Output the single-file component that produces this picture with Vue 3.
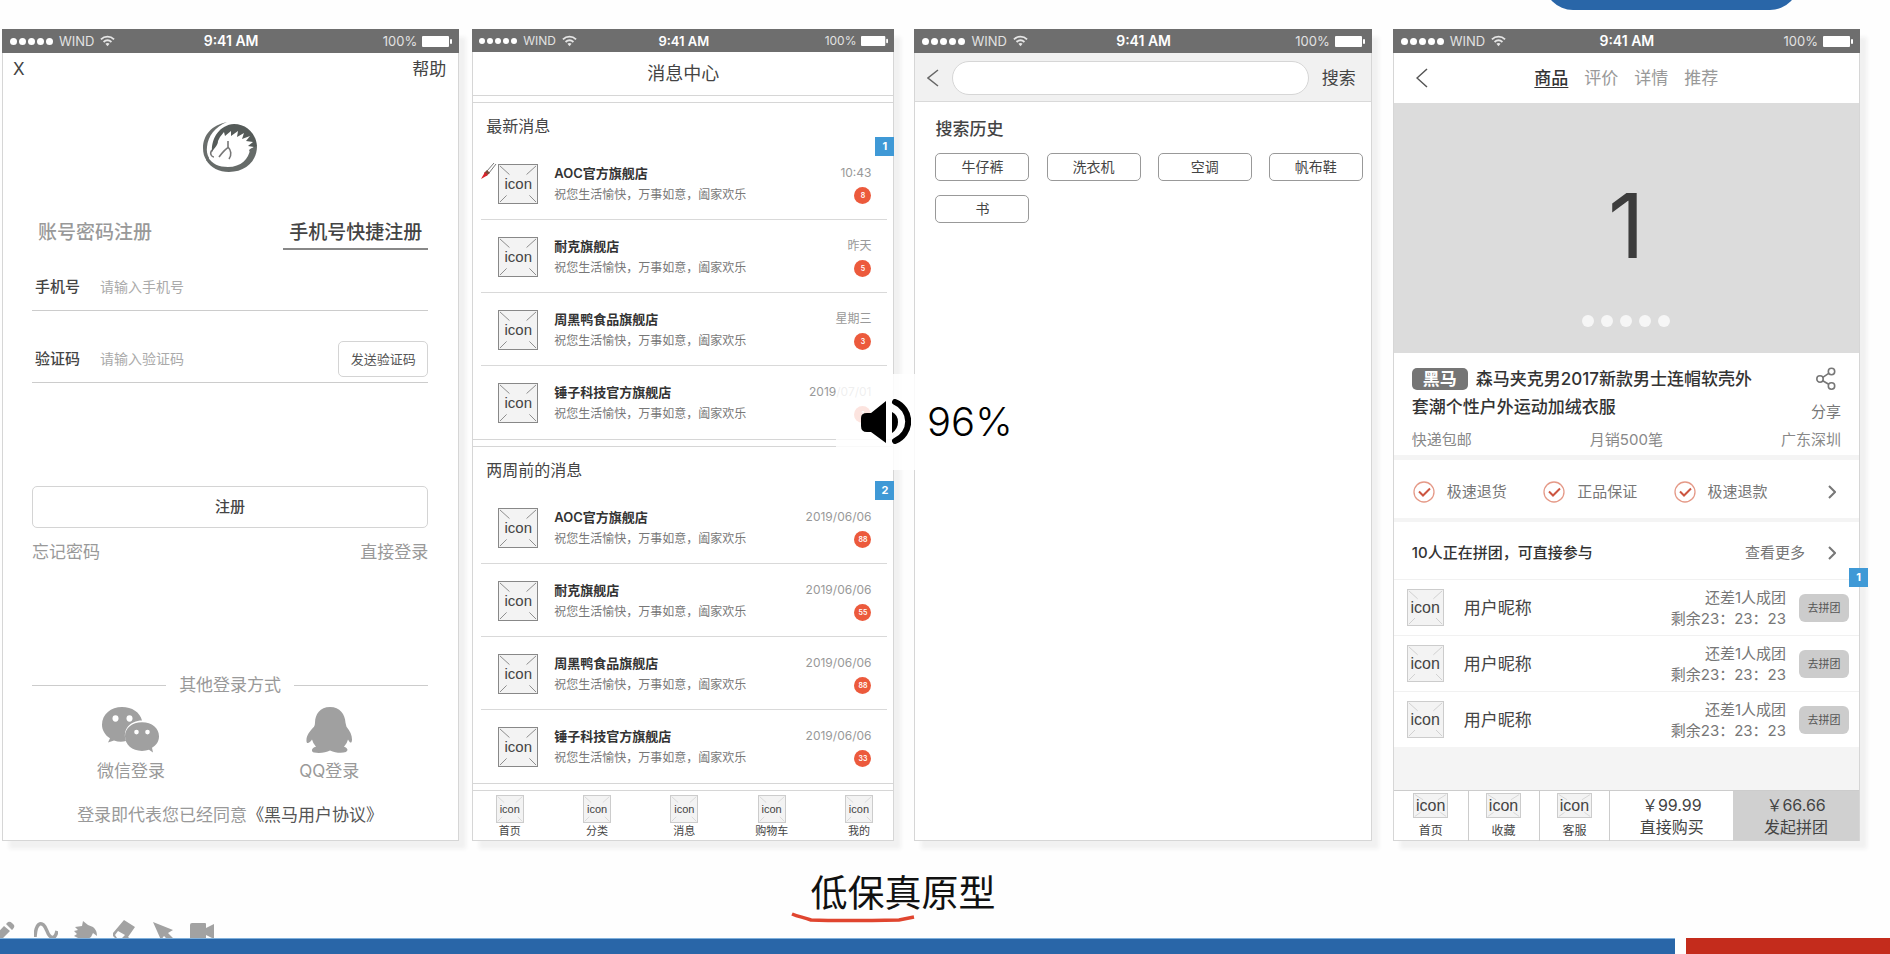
<script setup>
const phones = ['register', 'messages', 'search', 'product']

const greeting = '祝您生活愉快，万事如意，阖家欢乐'
const sections = [
  {
    title: '最新消息',
    note: '1',
    pen: true,
    items: [
      { shop: 'AOC官方旗舰店', date: '10:43', count: 8 },
      { shop: '耐克旗舰店', date: '昨天', count: 5 },
      { shop: '周黑鸭食品旗舰店', date: '星期三', count: 3 },
      { shop: '锤子科技官方旗舰店', date: '2019/07/01', count: 1 },
    ],
  },
  {
    title: '两周前的消息',
    note: '2',
    pen: false,
    items: [
      { shop: 'AOC官方旗舰店', date: '2019/06/06', count: 88 },
      { shop: '耐克旗舰店', date: '2019/06/06', count: 55 },
      { shop: '周黑鸭食品旗舰店', date: '2019/06/06', count: 88 },
      { shop: '锤子科技官方旗舰店', date: '2019/06/06', count: 33 },
    ],
  },
]
const tabs = ['首页', '分类', '消息', '购物车', '我的']
const history = ['牛仔裤', '洗衣机', '空调', '帆布鞋', '书']
const productTabs = ['商品', '评价', '详情', '推荐']
const promises = ['极速退货', '正品保证', '极速退款']
const shortcuts = ['首页', '收藏', '客服']
</script>

<template>
  <div class="page">
    <div class="pill"></div>

    <main class="phones">
      <section v-for="phone in phones" :key="phone" class="phone" :class="phone">
        <div class="status">
          <div class="carrier">
            <span class="signal"><i v-for="n in 5" :key="n"></i></span>
            <span>WIND</span>
            <svg class="wifi" viewBox="0 0 16 12" fill="none" stroke="#e6e6e6" stroke-width="2">
              <path d="M1 4.2C5 .4 11 .4 15 4.2" />
              <path d="M3.8 7C6.3 4.8 9.7 4.8 12.2 7" />
              <path d="M8 11.5L5.8 9C7 8 9 8 10.2 9Z" fill="#e6e6e6" stroke="none" />
            </svg>
          </div>
          <b>9:41 AM</b>
          <div class="power">
            <span>100%</span>
            <svg class="battery" viewBox="0 0 30 11" fill="#fff">
              <rect width="27" height="11" rx="1" />
              <rect x="28" y="3" width="2" height="5" rx="1" />
            </svg>
          </div>
        </div>

        <div v-if="phone === 'register'" class="screen">
          <header class="reg-top">
            <button class="plain">X</button>
            <a href="#" class="dark">帮助</a>
          </header>
          <form class="reg" @submit.prevent>
            <svg class="logo" viewBox="0 0 55 51" aria-label="黑马">
              <path fill="#6a6e6c" d="M24 0C9 3 0 13 0 26C0 31 1 35 4 39L6 36C4 32 3.500 29 4 25C5 14 12 5 24 0Z" />
              <path fill="#555b59" d="M9 30C8 17 16 3 31 2C43 2 53 11 54 24L50 34L46 28L51 25L45 24L50 20L43 19L47 14L39 17L41 11L34 15L35 9L28 14L28 9L22 14L21 10L17 15L15 19C15 23 12 25 9 30Z" />
              <path fill="#666b69" d="M54 24C54 40 42 50 26 50C16 50 8 46 3 38L5 35C9 42 16 45 25 45C38 45 46 37 47 27Z" />
              <path fill="none" stroke="#777" stroke-width="1.600" d="M16 35C19 31 22 27 26 25M25 19L25 25C28 28 29 33 26 37M9 28C6 32 9 35 11 35" />
            </svg>
            <nav class="reg-tabs">
              <a href="#">账号密码注册</a>
              <a href="#" class="on">手机号快捷注册</a>
            </nav>
            <div class="field">
              <label for="mobile">手机号</label>
              <input id="mobile" type="tel" placeholder="请输入手机号" />
            </div>
            <div class="field second">
              <label for="code">验证码</label>
              <input id="code" type="text" placeholder="请输入验证码" />
              <button type="button" class="send">发送验证码</button>
            </div>
            <button class="submit">注册</button>
            <div class="reg-links">
              <a href="#">忘记密码</a>
              <a href="#">直接登录</a>
            </div>
            <div class="other"><span>其他登录方式</span></div>
            <div class="social">
              <a href="#">
                <svg viewBox="0 0 58 44" width="58" height="46" preserveAspectRatio="none" fill="#a0a0a0">
                  <path d="M20 0C9 0 0 7 0 17C0 22 3 27 8 30L6 34L12 32Q18 34 24 32.500C20 22 28 13 40 13C38 5 30 0 20 0Z" />
                  <path d="M40 14.500C30 14.500 23 20 23 28C23 36 30 42 40 42Q44 42 47 41L51 43.500L50 39C54 37 57 33 57 28C57 20 50 14.500 40 14.500Z" />
                  <g fill="#fff">
                    <circle cx="13.500" cy="11" r="3" /><circle cx="27.500" cy="11" r="3" />
                    <circle cx="34.500" cy="24" r="2.300" /><circle cx="45.500" cy="24" r="2.300" />
                  </g>
                </svg>
                微信登录
              </a>
              <a href="#">
                <svg viewBox="0 0 46 44" width="46" height="46" preserveAspectRatio="none" fill="#a0a0a0">
                  <path d="M24 0C14 0 9 7 9 15Q9 17 8 19C3 24 0 28 .5 33C1 36 4 34 6 31Q7 35 10 38C5 39 5 43 8 43.500C14 44.500 20 43.500 24 41.500C29 43.500 35 44.500 40 43C43 41 41 39 38 38Q41 35 42 31C44 35 46 35 46 31C46 27 44 23 40.500 19Q40 17 39.500 15C39 7 34 0 24 0Z" />
                </svg>
                QQ登录
              </a>
            </div>
            <p class="agree">登录即代表您已经同意<a href="#">《黑马用户协议》</a></p>
          </form>
        </div>

        <div v-else-if="phone === 'messages'" class="screen">
          <h1 class="msg-title">消息中心</h1>
          <div class="band"></div>
          <template v-for="section in sections" :key="section.title">
            <section class="group">
              <span class="note">{{ section.note }}</span>
              <h2>{{ section.title }}</h2>
              <svg v-if="section.pen" class="pen" viewBox="0 0 16 18">
                <path d="M13 1L6 9M15 2L8 11" fill="none" stroke="#777" stroke-width="1" />
                <path d="M6 8L9 11L5 14L3 11Z" fill="#7a4b3a" />
                <path d="M4 10L7 13L0 17Z" fill="#d8232a" />
              </svg>
              <ul>
                <li v-for="item in section.items" :key="item.shop">
                  <span class="ph big">
                    <svg viewBox="0 0 40 40" preserveAspectRatio="none"><path d="M1 1L11 10M39 1L29 10M1 39L8 32M39 39L32 32" /></svg>
                    <span>icon</span>
                  </span>
                  <div class="what">
                    <strong>{{ item.shop }}</strong>
                    <p>{{ greeting }}</p>
                  </div>
                  <div class="when">
                    <time>{{ item.date }}</time>
                    <span class="count">{{ item.count }}</span>
                  </div>
                </li>
              </ul>
            </section>
            <div class="band"></div>
          </template>
          <nav class="tabbar">
            <a v-for="tab in tabs" :key="tab" href="#">
              <span class="ph small">
                <svg viewBox="0 0 40 40" preserveAspectRatio="none"><path d="M1 1L11 10M39 1L29 10M1 39L8 32M39 39L32 32" /></svg>
                <span>icon</span>
              </span>
              {{ tab }}
            </a>
          </nav>
        </div>

        <div v-else-if="phone === 'search'" class="screen">
          <form class="search-bar" @submit.prevent>
            <button type="button" class="plain" aria-label="返回">
              <svg viewBox="0 0 12 18" width="12" height="18" fill="none" stroke="#666" stroke-width="1.500"><path d="M11 1L1 9L11 17" /></svg>
            </button>
            <input type="search" aria-label="搜索" />
            <button class="plain">搜索</button>
          </form>
          <div class="history">
            <h2>搜索历史</h2>
            <div class="chips">
              <button v-for="word in history" :key="word">{{ word }}</button>
            </div>
          </div>
        </div>

        <div v-else class="screen">
          <header class="prod-top">
            <button class="plain" aria-label="返回">
              <svg viewBox="0 0 12 20" width="12" height="20" fill="none" stroke="#555" stroke-width="1.500"><path d="M11 1L1 10L11 19" /></svg>
            </button>
            <nav>
              <a v-for="(tab, i) in productTabs" :key="tab" href="#" :class="{ on: i === 0 }">{{ tab }}</a>
            </nav>
          </header>
          <div class="hero">
            <span>1</span>
            <div class="dots"><i v-for="n in 5" :key="n"></i></div>
          </div>
          <div class="info">
            <div class="info-main">
              <h1><em>黑马</em>森马夹克男2017新款男士连帽软壳外套潮个性户外运动加绒衣服</h1>
              <a href="#" class="share">
                <svg viewBox="0 0 20 24" width="20" height="24" fill="none" stroke="#777" stroke-width="1.600">
                  <circle cx="4" cy="12" r="3.200" /><circle cx="15.500" cy="4.500" r="3.200" /><circle cx="15.500" cy="19" r="3.200" />
                  <path d="M6.800 10.300L12.700 6.300M6.800 13.700L12.700 17.300" />
                </svg>
                分享
              </a>
            </div>
            <div class="facts"><span>快递包邮</span><span>月销500笔</span><span>广东深圳</span></div>
          </div>
          <div class="promises">
            <span v-for="word in promises" :key="word">
              <svg viewBox="0 0 22 22" width="22" height="22" fill="none">
                <circle cx="11" cy="11" r="10" stroke="#e59a88" stroke-width="1.300" />
                <path d="M6 10.500L10 14.500L17 7.500" stroke="#cc5540" stroke-width="2" />
              </svg>
              {{ word }}
            </span>
            <svg viewBox="0 0 8 14" width="8" height="14" fill="none" stroke="#777" stroke-width="2"><path d="M1 1L7 7L1 13" /></svg>
          </div>
          <div class="team-head">
            <h2>10人正在拼团，可直接参与</h2>
            <a href="#">
              查看更多
              <svg viewBox="0 0 8 14" width="8" height="14" fill="none" stroke="#777" stroke-width="2"><path d="M1 1L7 7L1 13" /></svg>
            </a>
          </div>
          <div class="teams">
            <span class="note">1</span>
            <ul>
              <li v-for="n in 3" :key="n">
                <span class="ph mid">
                  <svg viewBox="0 0 40 40" preserveAspectRatio="none"><path d="M1 1L11 10M39 1L29 10M1 39L8 32M39 39L32 32" /></svg>
                  <span>icon</span>
                </span>
                <span class="nick">用户昵称</span>
                <p>还差1人成团<br />剩余23：23：23</p>
                <button>去拼团</button>
              </li>
            </ul>
          </div>
          <footer class="buy-bar">
            <a v-for="word in shortcuts" :key="word" href="#">
              <span class="ph wide">
                <svg viewBox="0 0 40 40" preserveAspectRatio="none"><path d="M1 1L11 10M39 1L29 10M1 39L8 32M39 39L32 32" /></svg>
                <span>icon</span>
              </span>
              {{ word }}
            </a>
            <button>￥99.99<br />直接购买</button>
            <button class="primary">￥66.66<br />发起拼团</button>
          </footer>
        </div>
      </section>
    </main>

    <div class="caption">
      <h1>
        低保真原型
        <svg viewBox="0 0 124 12" width="124" height="12" fill="none" stroke="#e0452f" stroke-width="3.500">
          <path d="M1 2C8 5 12 5 20 8C50 9 80 8.500 108 8C113 7 118 6 123 5" />
        </svg>
      </h1>
    </div>

    <nav class="tools">
      <button aria-label="铅笔">
        <svg viewBox="0 0 24 24"><path d="M-3 20L9 7L15 12L4 23L-3 24ZM11 5L13 3Q15 2 17 4L19 6Q20 8 18 10L17 11Z" /></svg>
      </button>
      <button aria-label="曲线">
        <svg viewBox="0 0 24 24"><path d="M1 18C2 2 9 1 13 12C16 20 21 21 23 12" fill="none" stroke="#a2a2a2" stroke-width="3.500" /></svg>
      </button>
      <button aria-label="手">
        <svg viewBox="0 0 24 24"><path d="M10 2L15 6L20 8Q24 11 24 17L20 14L18 18L12 22L5 19L1 17L4 15L1 12L5 11L2 8L9 7Z" /></svg>
      </button>
      <button aria-label="橡皮">
        <svg viewBox="0 0 24 24"><path d="M12 1L23 8L16 18L20 21H5L1 17V14ZM6 12L3 16L5 19H10L13 16Z" fill-rule="evenodd" /></svg>
      </button>
      <button aria-label="箭头">
        <svg viewBox="0 0 24 24"><path d="M2 3L22 11L17 14L22 19L18 22L13 17L10 21Z" /></svg>
      </button>
      <button aria-label="录像">
        <svg viewBox="0 0 24 24"><path d="M2 4H15Q16 4 16 5V9L24 5V20L16 16V20Q16 21 15 21H1Q0 21 0 20V6Q0 4 2 4Z" /></svg>
      </button>
    </nav>

    <div class="volume">
      <svg viewBox="0 0 50 46" width="50" height="46">
        <path d="M25 2V44L10 33H6Q0 33 0 27V19Q0 14 6 14H10Z" />
        <path d="M31 13Q37 16 37 23Q37 30 31 34Z" />
        <path d="M34 3A21 21 0 0 1 34 42" fill="none" stroke="#000" stroke-width="6" stroke-linecap="round" />
      </svg>
      <span>96%</span>
    </div>

    <div class="bottom"><div class="blue"></div><div class="red"></div></div>
  </div>
</template>

<style>
body {
  margin: 0;
  background: #fefefe;
}
</style>

<style scoped>
.page {
  position: relative;
  box-sizing: border-box;
  display: flex;
  flex-direction: column;
  min-height: 100vh;
  padding-top: 29px;
  overflow: hidden;
  background: #fefefe;
  color: #444;
  font-family: Inter, "Noto Sans CJK SC", sans-serif;
  font-size: 17px;
  line-height: 22px;
}
.page * {
  box-sizing: border-box;
}
h1, h2, p, ul {
  margin: 0;
  padding: 0;
  list-style: none;
  font-size: inherit;
  font-weight: 400;
}
a {
  color: inherit;
  text-decoration: none;
}
button, input {
  font: inherit;
  color: inherit;
  padding: 0;
  margin: 0;
  border: 0;
  background: none;
  outline: 0;
}
svg {
  display: block;
  flex: none;
}
.plain {
  display: block;
}
.pill {
  position: absolute;
  top: -60px;
  right: 91px;
  width: 255px;
  height: 70px;
  border-radius: 29px;
  background: #2966a8;
}

/* phones */
.phones {
  display: flex;
  padding: 0 30px 0 2px;
}
.phone {
  display: flex;
  flex-direction: column;
  min-width: 0;
  box-shadow: 7px 8px 4px #f1f1f1;
}
.register {
  flex: 457 1 0;
}
.messages {
  flex: 422 1 0;
  margin-left: 13px;
}
.search {
  flex: 457 1 0;
  margin-left: 20px;
}
.product {
  flex: 467 1 0;
  margin-left: 21px;
}
.status {
  display: grid;
  grid-template-columns: 1fr auto 1fr;
  align-items: center;
  height: 24px;
  padding: 0 7px 0 8px;
  background: #6e6e6e;
  color: #e2e2e2;
  font-size: 13px;
}
.status b {
  color: #fff;
  font-size: 14px;
  font-weight: 600;
}
.messages .status {
  height: 23px;
  padding: 0 6px 0 7px;
  font-size: 12px;
}
.messages .status b {
  font-size: 13px;
}
.carrier, .power {
  display: flex;
  align-items: center;
  gap: 6px;
}
.power {
  justify-content: flex-end;
  gap: 5px;
}
.signal {
  display: flex;
  gap: 2px;
}
.signal i {
  width: 7px;
  height: 7px;
  border-radius: 50%;
  background: #fff;
}
.messages .signal i {
  width: 6px;
  height: 6px;
}
.wifi {
  width: 15px;
  height: 12px;
}
.battery {
  width: 30px;
  height: 11px;
}
.messages .battery {
  width: 27px;
  height: 10px;
}
.screen {
  flex: 1;
  display: flex;
  flex-direction: column;
  border: 1px solid #d6d6d6;
  border-top: 0;
  background: #fff;
}

/* placeholder picture */
.ph {
  position: relative;
  flex: none;
  display: flex;
  align-items: center;
  justify-content: center;
  border: 1px solid #ccc;
  background: #f3f3f3;
  color: #444;
  font-family: "Liberation Sans", Arial, sans-serif;
}
.ph svg {
  position: absolute;
  inset: 0;
  width: 100%;
  height: 100%;
  fill: none;
  stroke: #ccc;
}
.ph span {
  position: relative;
}
.big {
  width: 40px;
  height: 40px;
  border-color: #888;
  font-size: 15px;
}
.big svg {
  stroke: #888;
}
.small {
  width: 28px;
  height: 28px;
  font-size: 11px;
}
.mid {
  width: 37px;
  height: 37px;
  font-size: 16px;
}
.wide {
  width: 35px;
  height: 25px;
  font-size: 16px;
}
.note {
  position: absolute;
  width: 19px;
  height: 19px;
  background: #3f99d6;
  color: #fff;
  font-size: 11px;
  font-weight: 700;
  line-height: 19px;
  text-align: center;
}

/* register */
.reg-top {
  display: flex;
  align-items: center;
  justify-content: space-between;
  height: 32px;
  padding: 0 12px 0 10px;
}
.reg {
  display: flex;
  flex-direction: column;
  padding: 37px 30px 0 29px;
  color: #999;
}
.logo {
  align-self: center;
  width: 55px;
  height: 51px;
}
.reg-tabs {
  display: flex;
  justify-content: space-between;
  margin-top: 41px;
  font-size: 19px;
  font-weight: 500;
  line-height: 30px;
}
.reg-tabs a {
  padding: 4px 6px 0;
  border-bottom: 2px solid transparent;
}
.reg-tabs .on {
  border-color: #888;
  color: #444;
}
.field {
  display: flex;
  align-items: center;
  height: 48px;
  margin-top: 13px;
  padding-left: 3px;
  border-bottom: 1px solid #ccc;
}
.second {
  margin-top: 24px;
}
.field label {
  width: 65px;
  color: #444;
  font-size: 15px;
  font-weight: 500;
}
.field input {
  flex: 1;
  min-width: 0;
  font-size: 14px;
}
.field input::placeholder {
  color: #aaa;
  opacity: 1;
}
.send {
  width: 90px;
  height: 36px;
  border: 1px solid #d4d4d4;
  border-radius: 5px;
  color: #555;
  font-size: 13px;
}
.submit {
  height: 42px;
  margin-top: 103px;
  border: 1px solid #d4d4d4;
  border-radius: 5px;
  color: #444;
  font-size: 15px;
  font-weight: 500;
}
.reg-links {
  display: flex;
  justify-content: space-between;
  margin-top: 13px;
}
.other {
  display: flex;
  align-items: center;
  gap: 13px;
  margin-top: 111px;
}
.other::before, .other::after {
  content: "";
  flex: 1;
  height: 1px;
  background: #ccc;
}
.social {
  display: grid;
  grid-template-columns: 1fr 1fr;
  margin-top: 11px;
}
.social a {
  display: flex;
  flex-direction: column;
  align-items: center;
  gap: 7px;
}
.agree {
  margin-top: 22px;
  text-align: center;
  white-space: nowrap;
}
.agree a {
  color: #555;
}

/* messages */
.msg-title {
  padding-top: 1px;
  font-size: 18px;
  line-height: 42px;
  text-align: center;
}
.band {
  height: 8px;
  border-top: 1px solid #d6d6d6;
  border-bottom: 1px solid #d6d6d6;
}
.group {
  position: relative;
}
.group h2 {
  padding: 2px 0 0 13px;
  font-size: 16px;
  line-height: 42px;
}
.group .note {
  top: 34px;
  right: -1px;
}
.pen {
  position: absolute;
  left: 8px;
  top: 59px;
  width: 16px;
  height: 18px;
}
.group li {
  display: flex;
  align-items: center;
  height: 73px;
  margin: 0 6px 0 8px;
  padding: 1px 16px 0 17px;
  border-bottom: 1px solid #d9d9d9;
}
.group li:last-child {
  border-bottom: 0;
}
.what {
  flex: 1;
  margin-left: 16px;
  font-size: 12px;
  color: #777;
  white-space: nowrap;
}
.what strong {
  display: block;
  color: #333;
  font-size: 13px;
  font-weight: 600;
}
.when {
  display: flex;
  flex-direction: column;
  align-items: flex-end;
  color: #999;
  font-size: 12px;
}
.count {
  width: 17px;
  height: 17px;
  margin: 3px 0 2px;
  border-radius: 50%;
  background: #ec5a3c;
  color: #fff;
  font-size: 7px;
  font-weight: 600;
  line-height: 17px;
  text-align: center;
}
.tabbar {
  display: flex;
  justify-content: space-between;
  padding: 4px 18px 0 20px;
}
.tabbar a {
  display: flex;
  flex-direction: column;
  align-items: center;
  min-width: 33px;
  font-size: 11px;
  line-height: 17px;
}

/* search */
.search-bar {
  display: flex;
  align-items: center;
  height: 49px;
  padding: 2px 15px 0 12px;
  border-bottom: 1px solid #d9d9d9;
  background: #f1f1f1;
}
.search-bar input {
  flex: 1;
  min-width: 0;
  height: 34px;
  margin: 0 13px;
  padding: 0 16px;
  border: 1px solid #d6d6d6;
  border-radius: 17px;
  background: #fff;
}
.history {
  padding: 16px 8px 0 20px;
}
.history h2 {
  font-weight: 500;
}
.chips {
  display: grid;
  grid-template-columns: repeat(4, 94px);
  justify-content: space-between;
  row-gap: 14px;
  margin-top: 13px;
}
.chips button {
  height: 28px;
  border: 1px solid #999;
  border-radius: 5px;
  font-size: 14px;
}

/* product */
.product .screen {
  background: #f4f4f4;
}
.prod-top, .info, .promises, .team-head, .teams, .buy-bar {
  background: #fff;
}
.prod-top {
  display: grid;
  grid-template-columns: 1fr auto 1fr;
  align-items: center;
  height: 50px;
  padding: 0 22px;
}
.prod-top nav {
  display: flex;
  gap: 16px;
  color: #999;
}
.prod-top .on {
  color: #333;
  font-weight: 500;
  text-decoration: underline;
  text-underline-offset: 3px;
}
.hero {
  position: relative;
  display: flex;
  align-items: center;
  justify-content: center;
  height: 250px;
  padding-bottom: 4px;
  background: #dcdcdc;
  color: #3c3c3c;
  font-size: 90px;
  line-height: 90px;
}
.dots {
  position: absolute;
  right: 0;
  bottom: 26px;
  left: 0;
  display: flex;
  justify-content: center;
  gap: 7px;
}
.dots i {
  width: 12px;
  height: 12px;
  border-radius: 50%;
  background: #f6f6f6;
}
.info {
  padding: 12px 18px 4px;
  border-bottom: 5px solid #f4f4f4;
}
.info-main {
  display: flex;
  justify-content: space-between;
  height: 60px;
}
.info h1 {
  width: 352px;
  color: #333;
  font-weight: 500;
  line-height: 28px;
}
.info em {
  display: inline-block;
  width: 56px;
  height: 22px;
  margin-right: 8px;
  border-radius: 5px;
  background: #757575;
  color: #fff;
  font-style: normal;
  font-weight: 700;
  line-height: 22px;
  text-align: center;
}
.share {
  display: flex;
  flex-direction: column;
  align-items: center;
  gap: 10px;
  padding-top: 2px;
  color: #777;
  font-size: 15px;
}
.facts {
  display: flex;
  justify-content: space-between;
  margin-top: 4px;
  color: #888;
  font-size: 15px;
}
.promises {
  display: flex;
  align-items: center;
  justify-content: space-between;
  height: 62px;
  padding: 5px 23px 0 19px;
  border-bottom: 4px solid #f4f4f4;
  color: #777;
  font-size: 15px;
}
.promises span {
  display: flex;
  gap: 12px;
}
.promises span:nth-of-type(3) {
  margin-right: 24px;
}
.team-head {
  display: flex;
  align-items: center;
  justify-content: space-between;
  height: 57px;
  padding: 4px 23px 0 18px;
  font-size: 15px;
}
.team-head h2 {
  color: #333;
  font-weight: 500;
}
.team-head a {
  display: flex;
  align-items: center;
  gap: 23px;
  color: #777;
}
.teams {
  position: relative;
}
.teams li {
  display: flex;
  align-items: center;
  height: 56px;
  padding: 0 10px 0 13px;
  border-top: 1px solid #f1f1f1;
}
.teams p {
  margin-left: auto;
  color: #777;
  font-size: 15px;
  line-height: 21px;
  text-align: right;
}
.teams button {
  width: 50px;
  height: 28px;
  margin-left: 13px;
  border-radius: 6px;
  background: #ccc;
  color: #555;
  font-size: 11px;
}
.nick {
  margin-left: 20px;
}
.teams .note {
  top: -11px;
  right: -9px;
}
.buy-bar {
  display: grid;
  grid-template-columns: 75fr 71fr 71fr 123fr 126fr;
  height: 50px;
  margin-top: auto;
  border-top: 1px solid #ccc;
  font-size: 16px;
}
.buy-bar a {
  display: flex;
  flex-direction: column;
  align-items: center;
  gap: 3px;
  padding-top: 2px;
  border-right: 1px solid #ccc;
  font-size: 12px;
  line-height: 20px;
}
.buy-bar .primary {
  background: #d0d0d0;
}

/* caption and bottom */
.caption {
  display: flex;
  justify-content: center;
  padding: 28px 84px 0 0;
}
.caption h1 {
  position: relative;
  color: #111;
  font-size: 37px;
  line-height: 50px;
}
.caption svg {
  position: absolute;
  left: -20px;
  top: 43px;
}
.tools {
  position: absolute;
  bottom: 11px;
  left: -5px;
  display: flex;
  gap: 15px;
}
.tools svg {
  width: 24px;
  height: 24px;
  fill: #a2a2a2;
}
.bottom {
  position: relative;
  display: grid;
  grid-template-columns: 1675fr 204fr;
  gap: 11px;
  height: 16px;
  margin-top: auto;
}
.blue {
  border-top: 1px solid #7fb0dc;
  background: #2966a8;
}
.red {
  background: #c42c1c;
}
.volume {
  position: absolute;
  top: 374px;
  left: 50%;
  display: flex;
  align-items: center;
  gap: 16px;
  width: 218px;
  height: 96px;
  margin-left: -109px;
  padding-left: 25px;
  background: rgba(255, 255, 255, 0.84);
  color: #000;
  font-size: 40px;
  font-weight: 300;
  line-height: 48px;
}
</style>
